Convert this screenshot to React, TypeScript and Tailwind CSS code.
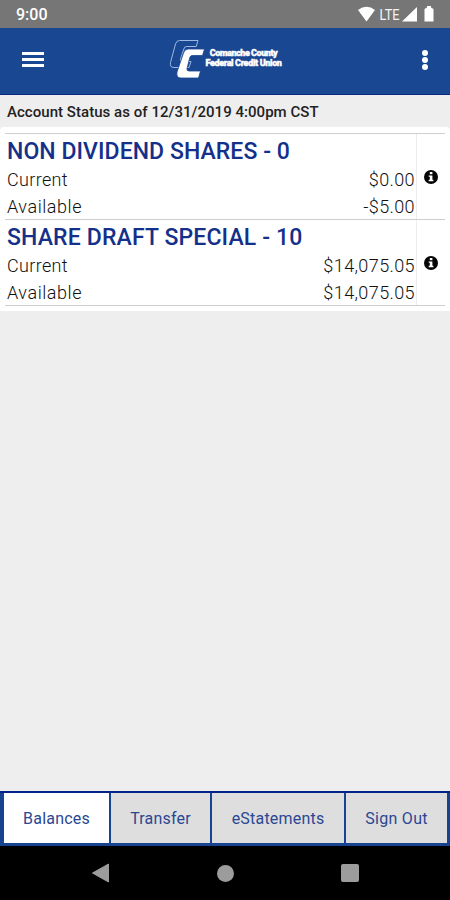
import React from "react";

function InfoIcon() {
  return (
    <svg width="14" height="14" viewBox="0 0 14 14" className="block">
      <circle cx="7" cy="7" r="7" fill="#050505" />
      <rect x="5.8" y="2" width="2.6" height="2.2" fill="#fff" />
      <path d="M4.7 5.4h3.700v4.400h1v1.400H4.700V9.800h1.100v-3H4.700Z" fill="#fff" />
    </svg>
  );
}

function Logo() {
  return (
    <div className="flex h-[40px] w-[114px]">
      <svg width="36" height="40" viewBox="0 0 36 40" className="shrink-0">
        <path
          d="M10.500 1.500H29L27.200 7.500H17.500Q15.500 7.500 14.800 10L11.500 20Q10.800 22.500 13 22.500H22L20 28.500H5Q.5 28.500 1.500 23.500L6.500 5Q7.500 1.500 10.500 1.500Z"
          fill="none"
          stroke="#9db8e2"
          strokeWidth="1"
        />
        <path
          d="M35.500 10H19.500q-4 0-5 4L8 33q-1 6 4 6H29.500l2-7H20q-2.500 0-2-2.500L20.800 18.500q.5-2 2.500-2H33.500Z"
          fill="#fff"
          stroke="#194791"
          strokeWidth="0.8"
        />
      </svg>
      <div className="flex w-[78px] flex-col items-center pt-[9px] font-[Roboto,sans-serif] text-[9px] font-black leading-[10px] text-white [-webkit-text-stroke:0.4px_white]">
        <span className="whitespace-nowrap tracking-[-0.45px]">Comanche County</span>
        <span className="whitespace-nowrap tracking-[-0.35px]">Federal Credit Union</span>
      </div>
    </div>
  );
}

type AccountProps = { name: string; spacing: string; current: string; available: string };

function Account({ name, spacing, current, available }: AccountProps) {
  return (
    <section className="flex h-[86px] border-b border-[#cfcfcf]">
      <div className="w-[412px] border-r border-[#ededed] pl-[2px] pr-px">
        <h2 className={`h-8 whitespace-nowrap text-[23px] font-medium leading-[36px] text-[#14308a] ${spacing}`}>{name}</h2>
        <div className="flex h-[27px] justify-between text-[18px] font-light leading-[27px]">
          <span className="tracking-[0.35px]">Current</span>
          <span className="tracking-[0.4px]">{current}</span>
        </div>
        <div className="flex h-[27px] justify-between text-[18px] font-light leading-[27px]">
          <span className="tracking-[0.55px]">Available</span>
          <span className="tracking-[0.4px]">{available}</span>
        </div>
      </div>
      <div className="pl-[7px] pt-9">
        <InfoIcon />
      </div>
    </section>
  );
}

export default function App() {
  return (
    <div className="flex h-[900px] w-[450px] flex-col overflow-hidden bg-[#eeeeee] font-[Roboto,sans-serif] text-[#111]">
      <div className="flex h-7 shrink-0 items-center justify-between bg-[#767676] pl-4 pr-[15px] text-white">
        <span className="pt-[2px] text-[16px] font-medium">9:00</span>
        <svg width="78" height="28" viewBox="0 0 78 28">
          <path d="M1 10Q9.500 3.500 18 10L9.500 21.500Z" fill="#fff" />
          <text x="22.500" y="20" fontFamily="Roboto" fontSize="15" textLength="20" lengthAdjust="spacingAndGlyphs" fill="#f4f4f4">LTE</text>
          <path d="M60 7v14.500H45Z" fill="#fff" />
          <path d="M67.500 9l2.500-1.500V6h4v1.500L76.500 9v12.500h-9V9Z" fill="#fff" />
        </svg>
      </div>

      <header className="flex h-[67px] shrink-0 items-center justify-between border-b border-[#092a83] bg-[#194791] pl-[22px] pr-[22px]">
        <div className="flex w-[22px] flex-col gap-[3px] pb-[3px]">
          <span className="h-[3px] bg-white" />
          <span className="h-[3px] bg-white" />
          <span className="h-[3px] bg-white" />
        </div>
        <div className="pr-[15px] pb-1">
          <Logo />
        </div>
        <div className="flex w-[6px] flex-col gap-[1.500px] pb-[2px]">
          <span className="size-[5.500px] rounded-full bg-white" />
          <span className="size-[5.500px] rounded-full bg-white" />
          <span className="size-[5.500px] rounded-full bg-white" />
        </div>
      </header>

      <div className="h-8 shrink-0 whitespace-nowrap pl-[7px] text-[15px] font-medium leading-[35px] tracking-[0.040px] text-[#222]">
        Account Status as of 12/31/2019 4:00pm CST
      </div>

      <main className="h-[184px] shrink-0 rounded-t-[4px] bg-white pl-[5px] pr-[5px] pt-[6px]">
        <div className="border-t border-[#cfcfcf]">
          <Account name="NON DIVIDEND SHARES - 0" spacing="tracking-[0.06px]" current="$0.00" available="-$5.00" />
          <Account name="SHARE DRAFT SPECIAL - 10" spacing="tracking-[0.14px]" current="$14,075.05" available="$14,075.05" />
        </div>
      </main>

      <div className="flex-1" />

      <nav className="grid h-[55px] shrink-0 grid-cols-[105px_99px_132px_101px] gap-x-[2px] border-t-2 border-[#05228a] bg-[#174391] pb-[3px] pl-1 text-[16px] text-[#2b4793]">
        <div className="flex items-center justify-center bg-white pt-[2px] tracking-[0.2px]">Balances</div>
        <div className="flex items-center justify-center bg-[#dedede] pt-[2px] tracking-[0.2px]">Transfer</div>
        <div className="flex items-center justify-center bg-[#dedede] pt-[2px] tracking-[0.2px]">eStatements</div>
        <div className="flex items-center justify-center bg-[#dedede] pt-[2px] tracking-[0.3px]">Sign Out</div>
      </nav>

      <footer className="flex h-[54px] shrink-0 items-center justify-between bg-black pl-[91px] pr-[91px]">
        <svg width="19" height="20" viewBox="0 0 19 20">
          <path d="M17.500 1v18L1.500 10Z" fill="#9c9c9c" stroke="#9c9c9c" strokeLinejoin="round" />
        </svg>
        <span className="size-[17px] rounded-full bg-[#9c9c9c]" />
        <span className="size-[18px] rounded-[2px] bg-[#9c9c9c]" />
      </footer>
    </div>
  );
}
